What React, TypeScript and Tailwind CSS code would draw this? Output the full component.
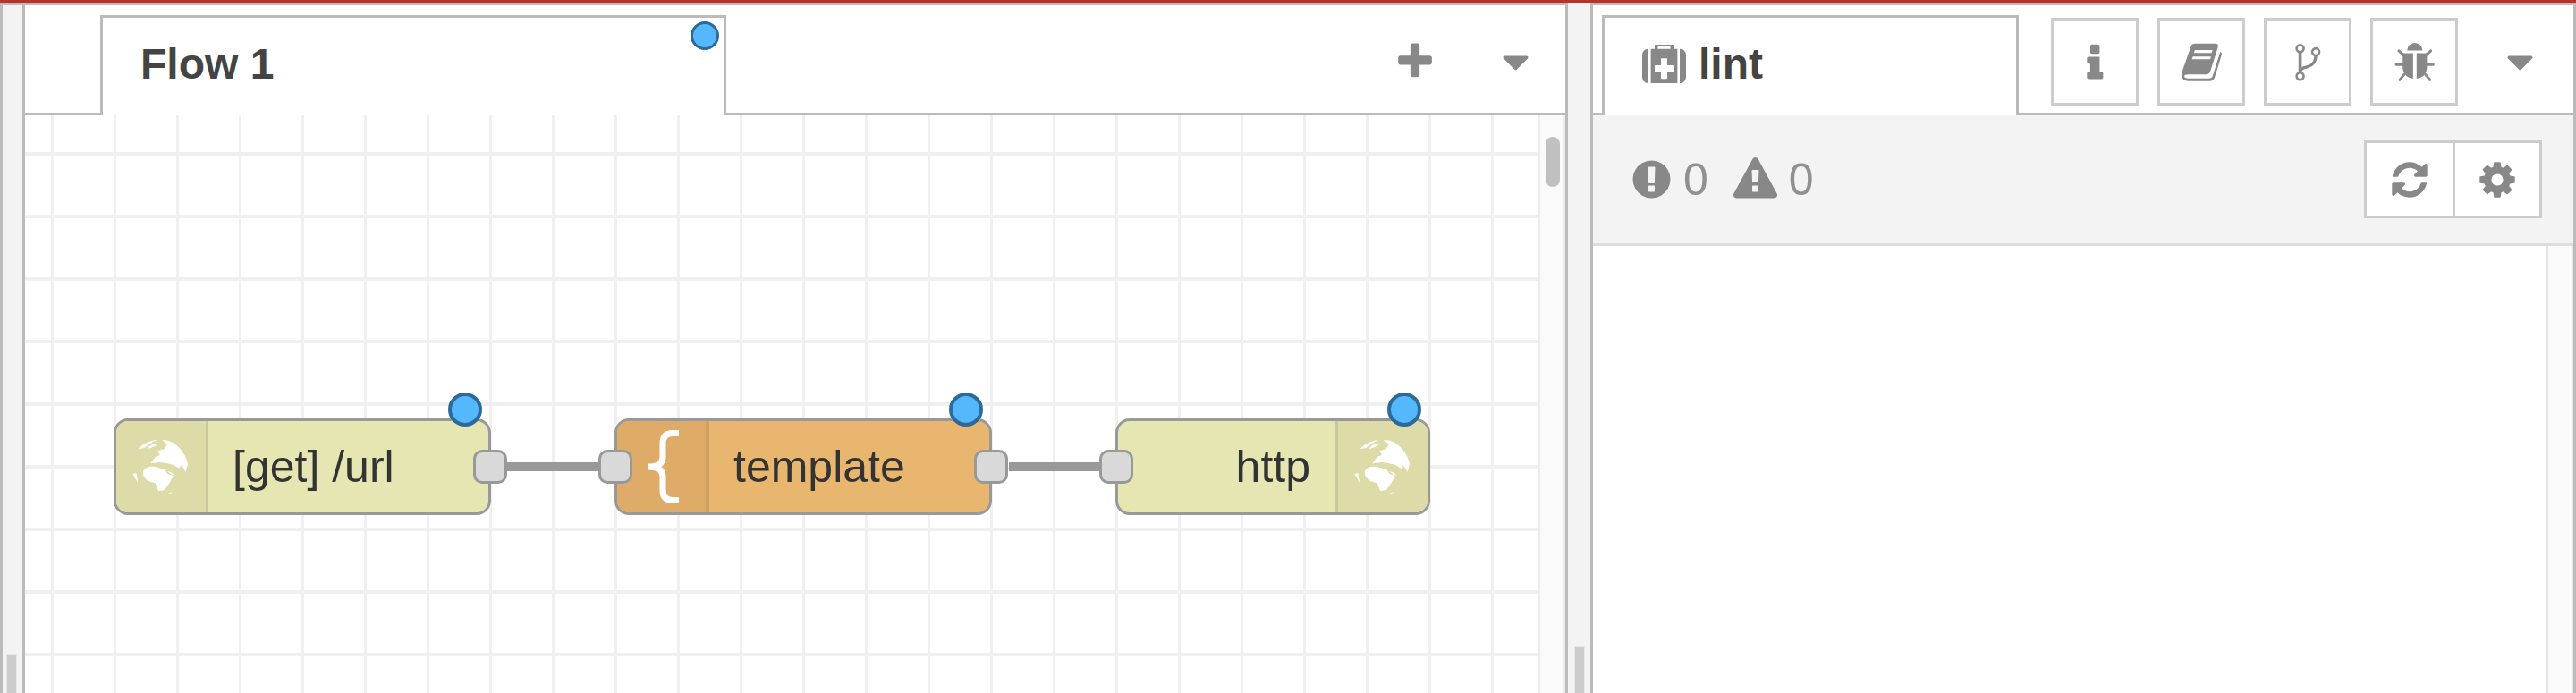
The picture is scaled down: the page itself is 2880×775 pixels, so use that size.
import React from "react";

const P = {
  plus: "M1600 736v192q0 40-28 68t-68 28h-416v416q0 40-28 68t-68 28h-192q-40 0-68-28t-28-68v-416h-416q-40 0-68-28t-28-68v-192q0-40 28-68t68-28h416v-416q0-40 28-68t68-28h192q40 0 68 28t28 68v416h416q40 0 68 28t28 68z",
  caret: "M1408 704q0 26-19 45l-448 448q-19 19-45 19t-45-19l-448-448q-19-19-19-45t19-45 45-19h896q26 0 45 19t19 45z",
  medkit: "M1280 1088v-192q0-14-9-23t-23-9h-224v-224q0-14-9-23t-23-9h-192q-14 0-23 9t-9 23v224h-224q-14 0-23 9t-9 23v192q0 14 9 23t23 9h224v224q0 14 9 23t23 9h192q14 0 23-9t9-23v-224h224q14 0 23-9t9-23zm-640-832h512v-128h-512v128zm-384 0v1280h-32q-92 0-158-66t-66-158v-832q0-92 66-158t158-66h32zm1184 0v1280h-1088v-1280h160v-160q0-40 28-68t68-28h576q40 0 68 28t28 68v160h160zm352 224v832q0 92-66 158t-158 66h-32v-1280h32q92 0 158 66t66 158z",
  circle: "M896 128q209 0 385.5 103t279.5 279.5 103 385.5-103 385.5-279.5 279.5-385.5 103-385.5-103-279.5-279.5-103-385.5 103-385.5 279.5-279.5 385.5-103zm128 1247v-190q0-14-9-23.5t-22-9.5h-192q-13 0-23 10t-10 23v190q0 13 10 23t23 10h192q13 0 22-9.5t9-23.5zm-2-344l18-621q0-12-10-18-10-8-24-8h-220q-14 0-24 8-10 6-10 18l17 621q0 10 10 17.5t24 7.5h185q14 0 23.5-7.5t10.5-17.5z",
  triangle: "M1024 1375v-190q0-14-9.5-23.5t-22.5-9.5h-192q-13 0-22.5 9.5t-9.5 23.5v190q0 14 9.5 23.5t22.5 9.5h192q13 0 22.5-9.5t9.5-23.5zm-2-374l18-459q0-12-10-19-13-11-24-11h-220q-11 0-24 11-10 7-10 21l17 457q0 10 10 16.5t24 6.5h185q14 0 23.5-6.5t10.5-16.5zm-14-934l768 1408q35 63-2 126-17 29-46.5 46t-63.5 17h-1536q-34 0-63.5-17t-46.5-46q-37-63-2-126l768-1408q17-31 47-49t65-18 65 18 47 49z",
  refresh: "M1639 1056q0 5-1 7-64 268-268 434.5t-478 166.5q-146 0-282.5-55t-243.5-157l-129 129q-19 19-45 19t-45-19-19-45v-448q0-26 19-45t45-19h448q26 0 45 19t19 45-19 45l-137 137q71 66 161 102t187 36q134 0 250-65t186-179q11-17 53-117 8-23 30-23h192q13 0 22.5 9.5t9.5 22.5zm25-800v448q0 26-19 45t-45 19h-448q-26 0-45-19t-19-45 19-45l138-138q-148-137-349-137-134 0-250 65t-186 179q-11 17-53 117-8 23-30 23h-199q-13 0-22.5-9.5t-9.5-22.5v-7q65-268 270-434.5t480-166.5q146 0 284 55.5t245 156.5l130-129q19-19 45-19t45 19 19 45z",
  cog: "M1152 896q0-106-75-181t-181-75-181 75-75 181 75 181 181 75 181-75 75-181zm512-109v222q0 12-8 23t-20 13l-185 28q-19 54-39 91 35 50 107 138 10 12 10 25t-9 23q-27 37-99 108t-94 71q-12 0-26-9l-138-108q-44 23-91 38-16 136-29 186-7 28-36 28h-222q-14 0-24.5-8.5t-11.5-21.5l-28-184q-49-16-90-37l-141 107q-10 9-25 9-14 0-25-11-126-114-165-168-7-10-7-23 0-12 8-23 15-21 51-66.5t54-70.5q-27-50-41-99l-183-27q-13-2-21-12.5t-8-23.5v-222q0-12 8-23t19-13l186-28q14-46 39-92-40-57-107-138-10-12-10-24 0-10 9-23 26-36 98.5-107.5t94.5-71.5q13 0 26 10l138 107q44-23 91-38 16-136 29-186 7-28 36-28h222q14 0 24.5 8.5t11.5 21.5l28 184q49 16 90 37l142-107q9-9 24-9 13 0 25 10 129 119 165 170 7 8 7 22 0 12-8 23-15 21-51 66.5t-54 70.5q26 50 41 98l183 28q13 2 21 12.5t8 23.5z",
};

function Fa({ d, size }: { d: string; size: string }) {
  return (
    <svg viewBox="0 0 1792 1792" className={`${size} shrink-0 fill-[#888]`}>
      <path d={d} />
    </svg>
  );
}

function MedkitIcon() {
  return (
    <svg viewBox="0 96 1792 1440" preserveAspectRatio="none" className="w-[49px] h-[43px] shrink-0 fill-[#888]">
      <path d={P.medkit} />
    </svg>
  );
}

function InfoIcon() {
  return (
    <svg viewBox="90 35 70 130" className="w-[23px] h-[43px] fill-[#888]">
      <rect x="108" y="40" width="32" height="32" rx="6" />
      <path d="M103 82H140V133H147Q152 133 152 138V152Q152 158 147 158H102Q97 158 97 152V138Q97 133 102 133H108V105H102Q97 105 97 100V87Q97 82 103 82Z" />
    </svg>
  );
}

function BookIcon() {
  return (
    <svg viewBox="405 35 150 135" className="w-[50px] h-[45px] fill-[#888]">
      <path
        fillRule="evenodd"
        d="M446 48Q449 40 460 40H526Q540 40 536 52L511 132Q508 144 496 144H436Q424 144 423 150Q424 157 436 157H506Q516 157 518 150L544 68Q550 70 549 76L525 154Q521 166 508 166H436Q420 166 414 152Q412 144 416 134ZM459 62L455 72H515L518 62ZM452 84L449 93H510L513 84Z"
      />
    </svg>
  );
}

function ForkIcon() {
  return (
    <svg viewBox="790 35 100 135" className="w-[33px] h-[45px] fill-none stroke-[#888]">
      <circle cx="813" cy="56" r="12" strokeWidth="8" />
      <circle cx="866" cy="68" r="12" strokeWidth="8" />
      <circle cx="813" cy="150" r="12" strokeWidth="8" />
      <path d="M813 68V138" strokeWidth="11" />
      <path d="M866 80Q866 112 838 118Q818 122 813 132" strokeWidth="10" />
    </svg>
  );
}

function BugIcon() {
  return (
    <svg viewBox="1125 32 140 136" className="w-[47px] h-[45px]">
      <path className="fill-[#888]" d="M1170 61A26 26 0 0 1 1222 61ZM1155 70H1190V156Q1160 152 1155 122ZM1237 70H1202V156Q1232 152 1237 122Z" />
      <path
        className="fill-none stroke-[#888]"
        strokeWidth="9"
        strokeLinecap="round"
        d="M1142 62L1160 78M1250 62L1232 78M1133 108H1160M1232 108H1258M1145 160L1160 142M1247 160L1232 142"
      />
    </svg>
  );
}

function Globe() {
  return (
    <svg viewBox="80 80 210 210" className="w-[70px] h-[70px] fill-white shrink-0">
      <path d="M108 126C120 110 145 98 172 94L150 106L128 122Z" />
      <path d="M137 126L150 113L174 105L166 116L150 122Z" />
      <path d="M188 94C230 95 265 130 275 176L268 202L258 186L252 180L246 190L226 178L200 172L180 170L150 174L166 152L182 146L174 132L196 126L206 110Z" />
      <path d="M125 200C130 186 155 180 175 188L198 194L206 208L226 216L214 238L196 264L176 266L166 240L140 232L126 216Z" />
      <path d="M205 200L220 204L232 214L222 212Z" />
      <path d="M90 210L102 206L108 240Z" />
      <path d="M200 277L222 270L222 272L202 279Z" />
    </svg>
  );
}

function Brace() {
  return (
    <svg viewBox="0 0 36 82" className="w-[36px] h-[82px] fill-none stroke-white shrink-0">
      <path strokeWidth="7" d="M36 3.5H29Q18 3.5 18 15V30Q18 41 2 41Q18 41 18 52V67Q18 78.5 29 78.5H36" />
    </svg>
  );
}

function Port({ className }: { className: string }) {
  return (
    <div className={`absolute top-[35px] w-[38px] h-[38px] rounded-[10px] border-[3px] border-[#999] bg-[#d9d9d9] ${className}`} />
  );
}

function Dot() {
  return <div className="absolute right-[10px] top-[-29px] w-[38px] h-[38px] rounded-full border-[4px] border-[#2b6a99] bg-[#55b7fc]" />;
}

const nodeText = "text-[#333] text-[50px] leading-none whitespace-nowrap";

export default function App() {
  return (
    <div className="w-[2880px] h-[775px] overflow-hidden flex flex-col bg-white font-['Liberation_Sans',Arial,sans-serif]">
      <div className="h-[3px] bg-[#b8322c] shrink-0" />
      <div className="flex flex-1 min-h-0">
        {/* left separator */}
        <div className="w-[28px] shrink-0 border-x-[3px] border-t-[3px] border-[#bbb] bg-[#f3f3f3] flex flex-col justify-end">
          <div className="ml-[4px] w-[12px] h-[44px] border border-b-0 border-[#e8e8e8] bg-[#ccc]" />
        </div>

        {/* workspace */}
        <div className="w-[1722px] shrink-0 flex flex-col border-t-[3px] border-[#bbb]">
          <div className="h-[123px] shrink-0 flex border-b-[3px] border-[#bbb]">
            <div className="relative ml-[84px] mt-[11px] w-[700px] h-[112px] border-x-[3px] border-t-[3px] border-[#bbb] bg-white flex items-center pl-[42px] pb-[6px]">
              <span className="text-[48px] leading-none font-bold text-[#444]">Flow 1</span>
              <div className="absolute right-[5px] top-[4px] w-[32px] h-[32px] rounded-full border-[3px] border-[#2b6a99] bg-[#55b7fc]" />
            </div>
            <div className="ml-auto mr-[31px] mt-[39px] flex gap-[64px] self-start">
              <Fa d={P.plus} size="w-[48px] h-[48px]" />
              <Fa d={P.caret} size="w-[49px] h-[49px]" />
            </div>
          </div>

          <div className="flex-1 flex min-h-0">
            <div className="relative flex-1 bg-white bg-[linear-gradient(to_right,#f0f0f0_3px,transparent_3px),linear-gradient(to_bottom,#f0f0f0_4px,transparent_4px)] bg-[size:70px_70px] bg-[position:29px_41px]">
              {/* wires */}
              <div className="absolute left-[539px] top-[388px] w-[102px] h-[10px] bg-[#999]" />
              <div className="absolute left-[1100px] top-[388px] w-[101px] h-[10px] bg-[#999]" />

              {/* [get] /url */}
              <div className="absolute left-[99px] top-[339px] w-[422px] h-[108px]">
                <div className="w-full h-full rounded-[16px] border-[3px] border-[#999] overflow-hidden flex bg-[#e6e6b3]">
                  <div className="w-[103px] shrink-0 border-r-[3px] border-[#c9c99c] bg-[#dddca9] flex items-center justify-center">
                    <Globe />
                  </div>
                  <div className="flex items-center pl-[27px] pb-[1px]">
                    <span className={nodeText}>[get] /url</span>
                  </div>
                </div>
                <Port className="right-[-18px]" />
                <Dot />
              </div>

              {/* template */}
              <div className="absolute left-[659px] top-[339px] w-[422px] h-[108px]">
                <div className="w-full h-full rounded-[16px] border-[3px] border-[#999] overflow-hidden flex bg-[#e9b66f]">
                  <div className="w-[103px] shrink-0 border-r-[4px] border-[#cfa062] bg-[#deac68] flex items-center pl-[33px]">
                    <Brace />
                  </div>
                  <div className="flex items-center pl-[27px] pb-[1px]">
                    <span className={nodeText}>template</span>
                  </div>
                </div>
                <Port className="left-[-18px]" />
                <Port className="right-[-18px]" />
                <Dot />
              </div>

              {/* http */}
              <div className="absolute left-[1219px] top-[339px] w-[352px] h-[108px]">
                <div className="w-full h-full rounded-[16px] border-[3px] border-[#999] overflow-hidden flex bg-[#e6e6b3]">
                  <div className="flex-1 flex items-center justify-end pr-[28px] pb-[1px]">
                    <span className={nodeText}>http</span>
                  </div>
                  <div className="w-[103px] shrink-0 border-l-[3px] border-[#c9c99c] bg-[#dddca9] flex items-center justify-center">
                    <Globe />
                  </div>
                </div>
                <Port className="left-[-18px]" />
                <Dot />
              </div>
            </div>

            {/* vertical scrollbar */}
            <div className="w-[30px] shrink-0 border-x-[2px] border-[#ececec] bg-[#fafafa] pl-[6px] pt-[24px]">
              <div className="w-[16px] h-[56px] rounded-[8px] bg-[#c0c0c0]" />
            </div>
          </div>
        </div>

        {/* middle separator */}
        <div className="w-[31px] shrink-0 border-x-[3px] border-[#bbb] bg-[#f3f3f3] flex flex-col justify-end">
          <div className="ml-[7px] w-[12px] h-[53px] border border-b-0 border-[#e8e8e8] bg-[#ccc]" />
        </div>

        {/* sidebar */}
        <div className="flex-1 min-w-0 flex flex-col border-t-[3px] border-r-[3px] border-[#bbb]">
          <div className="h-[123px] shrink-0 flex border-b-[3px] border-[#bbb]">
            <div className="ml-[10px] mt-[11px] w-[466px] h-[112px] border-x-[3px] border-t-[3px] border-[#bbb] bg-white flex items-center pl-[42px] pb-[6px] gap-[14px]">
              <MedkitIcon />
              <span className="text-[48px] leading-none font-bold text-[#444]">lint</span>
            </div>
            <div className="ml-[36px] mt-[14px] flex gap-[21px] self-start">
              <div className="w-[98px] h-[98px] border-[3px] border-[#ccc] flex items-center justify-center"><InfoIcon /></div>
              <div className="w-[98px] h-[98px] border-[3px] border-[#ccc] flex items-center justify-center"><BookIcon /></div>
              <div className="w-[98px] h-[98px] border-[3px] border-[#ccc] flex items-center justify-center"><ForkIcon /></div>
              <div className="w-[98px] h-[98px] border-[3px] border-[#ccc] flex items-center justify-center"><BugIcon /></div>
            </div>
            <div className="ml-[45px] mt-[39px] self-start">
              <Fa d={P.caret} size="w-[49px] h-[49px]" />
            </div>
          </div>

          <div className="h-[146px] shrink-0 bg-[#f3f3f3] border-b-[3px] border-[#ddd] flex items-center pl-[41px] pr-[35px]">
            <Fa d={P.circle} size="w-[49px] h-[49px]" />
            <span className="ml-[11px] text-[50px] leading-none text-[#909090]">0</span>
            <span className="ml-[28px]"><Fa d={P.triangle} size="w-[49px] h-[49px]" /></span>
            <span className="ml-[13px] text-[50px] leading-none text-[#909090]">0</span>
            <div className="ml-auto flex h-[87px] border-[3px] border-[#ccc] bg-white">
              <div className="w-[96px] border-r-[3px] border-[#ccc] flex items-center justify-center box-content"><Fa d={P.refresh} size="w-[46px] h-[46px]" /></div>
              <div className="w-[94px] flex items-center justify-center"><Fa d={P.cog} size="w-[46px] h-[46px]" /></div>
            </div>
          </div>

          <div className="flex-1 flex min-h-0">
            <div className="flex-1 bg-white" />
            <div className="w-[30px] shrink-0 border-x-[2px] border-[#e6e6e6] bg-[#fafafa]" />
          </div>
        </div>
      </div>
    </div>
  );
}
